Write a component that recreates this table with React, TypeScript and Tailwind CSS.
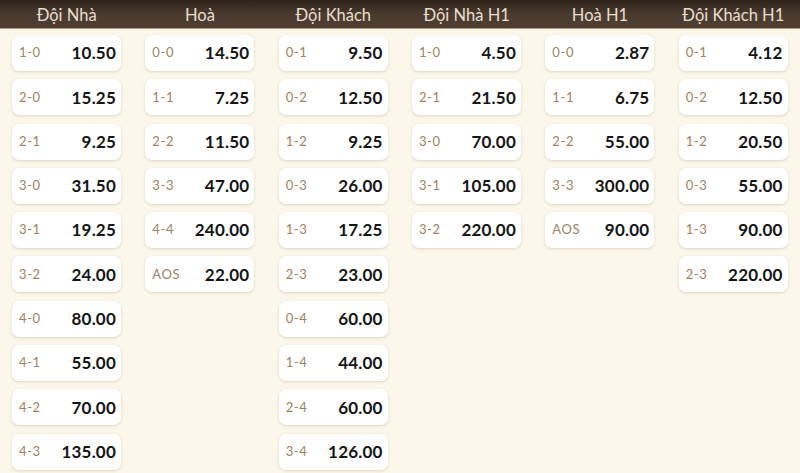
const columns: { title: string; rows: [string, string][] }[] = [
  {
    title: 'Đội Nhà',
    rows: [
      ['1-0', '10.50'],
      ['2-0', '15.25'],
      ['2-1', '9.25'],
      ['3-0', '31.50'],
      ['3-1', '19.25'],
      ['3-2', '24.00'],
      ['4-0', '80.00'],
      ['4-1', '55.00'],
      ['4-2', '70.00'],
      ['4-3', '135.00'],
    ],
  },
  {
    title: 'Hoà',
    rows: [
      ['0-0', '14.50'],
      ['1-1', '7.25'],
      ['2-2', '11.50'],
      ['3-3', '47.00'],
      ['4-4', '240.00'],
      ['AOS', '22.00'],
    ],
  },
  {
    title: 'Đội Khách',
    rows: [
      ['0-1', '9.50'],
      ['0-2', '12.50'],
      ['1-2', '9.25'],
      ['0-3', '26.00'],
      ['1-3', '17.25'],
      ['2-3', '23.00'],
      ['0-4', '60.00'],
      ['1-4', '44.00'],
      ['2-4', '60.00'],
      ['3-4', '126.00'],
    ],
  },
  {
    title: 'Đội Nhà H1',
    rows: [
      ['1-0', '4.50'],
      ['2-1', '21.50'],
      ['3-0', '70.00'],
      ['3-1', '105.00'],
      ['3-2', '220.00'],
    ],
  },
  {
    title: 'Hoà H1',
    rows: [
      ['0-0', '2.87'],
      ['1-1', '6.75'],
      ['2-2', '55.00'],
      ['3-3', '300.00'],
      ['AOS', '90.00'],
    ],
  },
  {
    title: 'Đội Khách H1',
    rows: [
      ['0-1', '4.12'],
      ['0-2', '12.50'],
      ['1-2', '20.50'],
      ['0-3', '55.00'],
      ['1-3', '90.00'],
      ['2-3', '220.00'],
    ],
  },
];

function OddCard({ score, odd }: { score: string; odd: string }) {
  return (
    <div className="flex h-[36px] w-[109px] items-center justify-between rounded-[7px] bg-white pl-[7px] pr-[5px] shadow-[0_1px_3px_rgba(120,90,50,0.22)]">
      <span className="text-[13px] tracking-[0.6px] text-[#a08262]">{score}</span>
      <span className="text-[17px] font-bold tracking-[0.2px] text-[#151515]">{odd}</span>
    </div>
  );
}

export default function App() {
  return (
    <div className="h-[473px] w-[800px] overflow-hidden bg-[#fcf7eb] font-['Lato','Noto_Sans',sans-serif]">
      <div className="grid h-[29px] grid-cols-6 border-b border-[#b49a78] bg-gradient-to-b from-[#2e231b] via-[#4b3b2f] to-[#4f3f32]">
        {columns.map((c) => (
          <div key={c.title} className="flex items-center justify-center pt-[2px] text-[16.5px] text-[#e9dfcf]">
            {c.title}
          </div>
        ))}
      </div>
      <div className="grid grid-cols-6 pt-[6px]">
        {columns.map((c) => (
          <div key={c.title} className="flex flex-col gap-[8.3px] pl-[12px]">
            {c.rows.map(([s, o]) => (
              <OddCard key={s} score={s} odd={o} />
            ))}
          </div>
        ))}
      </div>
    </div>
  );
}
